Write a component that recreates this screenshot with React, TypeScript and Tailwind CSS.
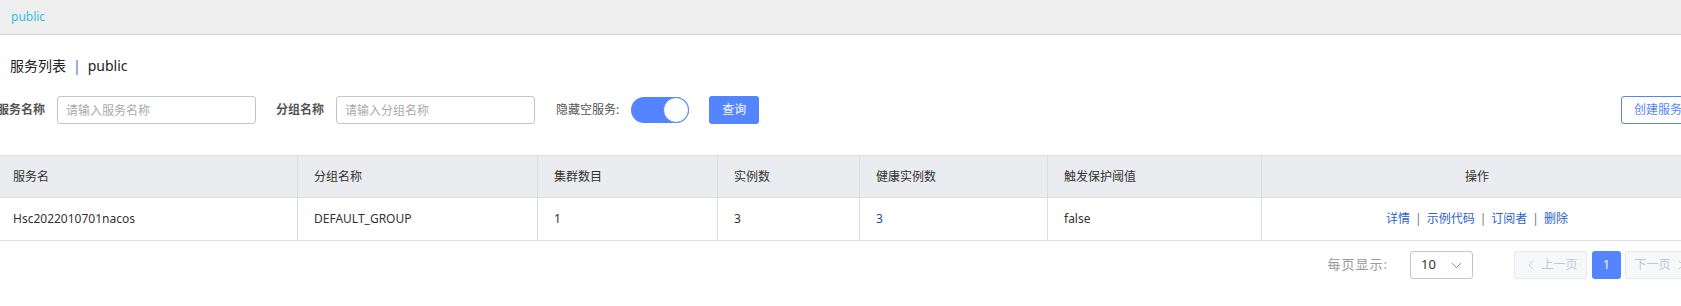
import { ChevronDown, ChevronLeft, ChevronRight } from 'lucide-react';

const font = { fontFamily: '"Noto Sans", "Noto Sans CJK SC", sans-serif' };

const columns = [
  { title: '服务名', width: 'w-[301px]' },
  { title: '分组名称', width: 'w-[240px]' },
  { title: '集群数目', width: 'w-[180px]' },
  { title: '实例数', width: 'w-[142px]' },
  { title: '健康实例数', width: 'w-[188px]' },
  { title: '触发保护阈值', width: 'w-[214px]' },
];

const actions = ['详情', '示例代码', '订阅者', '删除'];

function SearchInput({ placeholder }: { placeholder: string }) {
  return (
    <input
      className="w-[199px] h-[28px] px-[8px] border border-[#c4c6cf] rounded-[3px] text-[12px] text-[#333] placeholder:text-[#aaa] outline-none"
      placeholder={placeholder}
    />
  );
}

export default function App() {
  return (
    <div className="w-[1681px] h-[306px] overflow-hidden bg-white text-[#333]" style={font}>
      {/* top namespace bar */}
      <div className="h-[35px] bg-[#eeeeee] border-b border-[#d1d1d1] flex items-center pl-[11px]">
        <span className="text-[12px] text-[#2ec2e6]">public</span>
      </div>

      <div className="w-[1701px] -ml-[3px]">
        {/* title */}
        <div className="mt-[20px] h-[20px] ml-[13px] flex items-center text-[14px] text-[#222]">
          <span>服务列表</span>
          <span className="mx-[7px] text-[#3a6fd0]">|</span>
          <span>public</span>
        </div>

        {/* search form */}
        <div className="mt-[21px] h-[28px] flex items-center text-[12px]">
          <span className="w-[48px] font-bold text-[#555]">服务名称</span>
          <div className="ml-[12px] mr-[20px]">
            <SearchInput placeholder="请输入服务名称" />
          </div>
          <span className="w-[48px] font-bold text-[#555]">分组名称</span>
          <div className="ml-[12px] mr-[21px]">
            <SearchInput placeholder="请输入分组名称" />
          </div>
          <span className="text-[#555]">隐藏空服务:</span>
          <div className="ml-[12px] w-[58px] h-[26px] rounded-full bg-[#5584ff] flex justify-end">
            <div className="w-[26px] h-[26px] rounded-full bg-white border border-[#5584ff]" />
          </div>
          <button className="ml-[20px] w-[50px] h-[28px] rounded-[3px] bg-[#5584ff] text-white text-[12px]">
            查询
          </button>
          <button className="ml-auto mr-[3px] h-[28px] px-[12px] rounded-[3px] border border-[#5584ff] bg-white text-[#5584ff] text-[12px]">
            创建服务
          </button>
        </div>

        {/* table */}
        <div className="mt-[31px] w-[1695px] border-t border-b border-[#dcdee3] text-[12px]">
          <div className="flex h-[42px] bg-[#ebecf0] border-b border-[#dcdee3]">
            {columns.map((c) => (
              <div
                key={c.title}
                className={`${c.width} flex items-center pl-[16px] border-r border-[#dcdee3] text-[#333]`}
              >
                {c.title}
              </div>
            ))}
            <div className="flex-1 flex items-center justify-center text-[#333]">操作</div>
          </div>
          <div className="flex h-[42px]">
            <div className="w-[301px] flex items-center pl-[16px] border-r border-[#dcdee3]">Hsc2022010701nacos</div>
            <div className="w-[240px] flex items-center pl-[16px] border-r border-[#dcdee3]">DEFAULT_GROUP</div>
            <div className="w-[180px] flex items-center pl-[16px] border-r border-[#dcdee3]">1</div>
            <div className="w-[142px] flex items-center pl-[16px] border-r border-[#dcdee3]">3</div>
            <div className="w-[188px] flex items-center pl-[16px] border-r border-[#dcdee3] text-[#27479a]">3</div>
            <div className="w-[214px] flex items-center pl-[16px] border-r border-[#dcdee3]">false</div>
            <div className="flex-1 flex items-center justify-center text-[#2b63c9]">
              {actions.map((a, i) => (
                <span key={a} className="flex items-center">
                  {i > 0 && <span className="mx-[5px] text-[#777]">|</span>}
                  <span>{a}</span>
                </span>
              ))}
            </div>
          </div>
        </div>

        {/* pagination */}
        <div className="mt-[10px] h-[28px] flex items-center justify-end text-[12px]">
          <span className="text-[13px] text-[#999] tracking-[1px]">每页显示:</span>
          <div className="ml-[22px] w-[63px] h-[28px] border border-[#c4c6cf] rounded-[3px] flex items-center justify-between pl-[10px] pr-[7px] text-[13px] text-[#333]">
            <span>10</span>
            <ChevronDown className="w-[17px] h-[17px] text-[#777]" strokeWidth={1.2} />
          </div>
          <button className="ml-[41px] w-[73px] h-[28px] border border-[#e6e7eb] bg-[#f7f8fa] rounded-[3px] flex items-center justify-center gap-[2px] text-[#c4c6cf]">
            <ChevronLeft className="w-[16px] h-[16px]" strokeWidth={1.3} />
            <span>上一页</span>
          </button>
          <button className="ml-[5px] w-[29px] h-[28px] rounded-[3px] bg-[#5584ff] text-white">1</button>
          <button className="ml-[4px] w-[73px] h-[28px] border border-[#e6e7eb] bg-[#f7f8fa] rounded-[3px] flex items-center justify-center gap-[2px] text-[#c4c6cf]">
            <span>下一页</span>
            <ChevronRight className="w-[16px] h-[16px]" strokeWidth={1.3} />
          </button>
        </div>
      </div>
    </div>
  );
}
